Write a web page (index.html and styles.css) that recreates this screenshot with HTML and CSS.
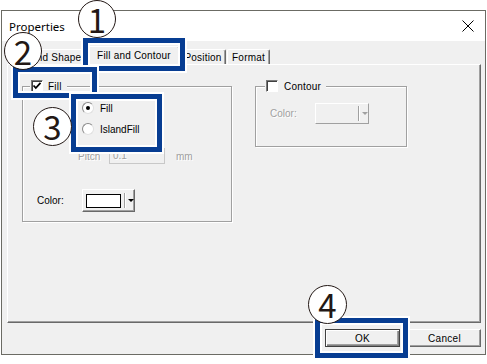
FILE: index.html
```html
<!DOCTYPE html>
<html lang="en">
  <head>
    <meta charset="UTF-8" />
    <title>Properties</title>
    <link rel="stylesheet" href="styles.css">
  </head>
  <body>
    <div class="screen">
      <div class="window">
        <div class="titlebar">
          <span class="title">Properties</span>
          <svg class="close" width="12" height="12" viewBox="0 0 12 12">
            <path d="M0.5 0.5 L11.5 11.5 M11.5 0.5 L0.5 11.5" stroke="#000" stroke-width="1" fill="none" />
          </svg>
        </div>

        <div class="client">
          <div class="tabs">
            <div class="tab tab-shape">Round Shape</div>
            <div class="tab active">Fill and Contour</div>
            <div class="tab tab-position">Position</div>
            <div class="tab tab-format">Format</div>
          </div>

          <div class="panel">
            <div class="group fill-group">
              <div class="group-title">
                <span class="check checked">
                  <svg width="10" height="10" viewBox="0 0 10 10">
                    <path d="M1.5 4.5 L3.8 7 L8.5 1.8" stroke="#000" stroke-width="1.8" fill="none" />
                  </svg>
                </span>
                <span>Fill</span>
              </div>

              <div class="radios">
                <div class="radio-row"><span class="radio on"></span>Fill</div>
                <div class="radio-row"><span class="radio"></span>IslandFill</div>
              </div>

              <div class="pitch-row">
                <span class="pitch-label disabled">Pitch</span>
                <span class="pitch-input disabled">0.1</span>
                <span class="pitch-unit disabled">mm</span>
              </div>

              <div class="color-row">
                <span class="color-label">Color:</span>
                <span class="color-button">
                  <span class="swatch"></span>
                  <span class="split"></span>
                  <span class="arrow"></span>
                </span>
              </div>
            </div>

            <div class="group contour-group">
              <div class="group-title">
                <span class="check"></span>
                <span>Contour</span>
              </div>
              <div class="contour-row">
                <span class="color-label disabled">Color:</span>
                <span class="color-button off">
                  <span class="swatch blank"></span>
                  <span class="split"></span>
                  <span class="arrow grey"></span>
                </span>
              </div>
            </div>
          </div>

          <div class="buttons">
            <div class="btn default">OK</div>
            <div class="btn">Cancel</div>
          </div>
        </div>
      </div>

      <!-- callouts -->
      <div class="mark box1"></div>
      <div class="mark box2"></div>
      <div class="mark box3"></div>
      <div class="mark box4"></div>

      <div class="badge badge1">1</div>
      <div class="badge badge2">2</div>
      <div class="badge badge3">3</div>
      <div class="badge badge4">4</div>
    </div>
  </body>
</html>
```

FILE: styles.css
```css
body {
  margin: 0;
  background: #fff;
  font-family: "Liberation Sans", Arial, sans-serif;
  font-size: 10px;
  color: #000;
}

.screen {
  position: relative;
  width: 487px;
  height: 364px;
  padding: 10px 0 0 1px;
  box-sizing: border-box;
  overflow: hidden;
}

.window {
  box-sizing: border-box;
  width: 485px;
  height: 345px;
  border: 1px solid #6b6b64;
  display: flex;
  flex-direction: column;
}

.titlebar {
  height: 30px;
  flex: none;
  background: #fff;
  display: flex;
  align-items: center;
  justify-content: space-between;
  padding: 0 11px 0 7px;
}

.title {
  font-family: "Noto Sans", "Open Sans", sans-serif;
  font-size: 11.5px;
}

.close {
  display: block;
}

.client {
  flex: 1;
  background: #f0f0f0;
  padding: 5px 4px 0 5px;
  display: flex;
  flex-direction: column;
}

/* tabs */
.tabs {
  display: flex;
  align-items: flex-end;
  height: 18px;
  padding-left: 2px;
  position: relative;
  z-index: 1;
}

.tab {
  box-sizing: border-box;
  height: 15px;
  display: flex;
  align-items: center;
  justify-content: center;
  border-top: 1px solid #fff;
  border-left: 1px solid #fff;
  border-right: 1px solid #696969;
  box-shadow: inset -1px 0 #a0a0a0;
  border-radius: 2px 2px 0 0;
  letter-spacing: 0.2px;
}

.tab-shape {
  width: 79px;
  padding-left: 2px;
}

.tab.active {
  width: 92px;
  height: 19px;
  margin-bottom: -1px;
  background: #f0f0f0;
  padding-bottom: 2px;
}

.tab-position {
  width: 46px;
}

.tab-format {
  width: 43px;
  margin-left: 1px;
}

.panel {
  box-sizing: border-box;
  height: 259px;
  border-top: 1px solid #fff;
  border-left: 1px solid #fff;
  border-right: 1px solid #696969;
  border-bottom: 1px solid #696969;
  box-shadow: inset -1px -1px #a0a0a0;
  padding: 21px 0 0 14px;
  display: flex;
  align-items: flex-start;
  gap: 23px;
}

/* group boxes */
.group {
  box-sizing: border-box;
  border: 1px solid #a0a0a0;
  box-shadow: inset 1px 1px #fff, 1px 1px #fff;
}

.fill-group {
  width: 210px;
  height: 136px;
}

.contour-group {
  width: 152px;
  height: 61px;
}

.group-title {
  display: flex;
  align-items: center;
  gap: 5px;
  width: max-content;
  height: 12px;
  margin: -7px 0 0 7px;
  padding: 0 5px 0 1px;
  background: #f0f0f0;
  letter-spacing: 0.2px;
}

.contour-group .group-title {
  margin-left: 9px;
  gap: 6px;
}

.check {
  box-sizing: border-box;
  width: 12px;
  height: 12px;
  background: #fff;
  border: 1px solid;
  border-color: #7a7a7a #fff #fff #7a7a7a;
  box-shadow: inset 1px 1px #404040;
  display: flex;
  align-items: center;
  justify-content: center;
}

.radios {
  margin: 10px 0 0 59px;
  display: flex;
  flex-direction: column;
  gap: 9px;
}

.radio-row {
  display: flex;
  align-items: center;
  gap: 6px;
  height: 12px;
}

.radio {
  box-sizing: border-box;
  width: 12px;
  height: 12px;
  border-radius: 50%;
  background: #fff;
  border: 1px solid;
  border-color: #8a8a8a #e0e0e0 #e0e0e0 #8a8a8a;
  position: relative;
}

.radio.on::after {
  content: "";
  position: absolute;
  left: 3px;
  top: 3px;
  width: 4px;
  height: 4px;
  border-radius: 50%;
  background: #000;
}

.disabled {
  color: #a0a0a0;
  text-shadow: 1px 1px #fff;
}

.pitch-row {
  display: flex;
  align-items: center;
  margin: 13px 0 0 55px;
  height: 16px;
}

.pitch-label {
  width: 31px;
}

.pitch-input {
  box-sizing: border-box;
  width: 56px;
  height: 16px;
  border: 1px solid #c8c8c8;
  padding: 1px 0 0 3px;
}

.pitch-unit {
  margin-left: 11px;
}

.color-row {
  display: flex;
  align-items: center;
  margin: 25px 0 0 14px;
}

.color-label {
  width: 45px;
}

.color-button {
  box-sizing: border-box;
  width: 53px;
  height: 23px;
  display: flex;
  align-items: center;
  padding-left: 3px;
  border-top: 1px solid #fff;
  border-left: 1px solid #fff;
  border-right: 1px solid #696969;
  border-bottom: 1px solid #696969;
  box-shadow: inset -1px -1px #a0a0a0;
}

.swatch {
  box-sizing: border-box;
  width: 35px;
  height: 14px;
  background: #fff;
  border: 1px solid #000;
}

.split {
  width: 1px;
  height: 15px;
  margin-left: 3px;
  background: #a0a0a0;
  box-shadow: 1px 0 #fff;
}

.arrow {
  margin-left: 3px;
  width: 0;
  height: 0;
  border-left: 3px solid transparent;
  border-right: 3px solid transparent;
  border-top: 3px solid #000;
}

.color-button.off {
  width: 54px;
  height: 21px;
  border-color: #fff #a0a0a0 #a0a0a0 #fff;
  box-shadow: none;
}

.swatch.blank {
  width: 36px;
  border: none;
  background: transparent;
}

.arrow.grey {
  border-top-color: #a0a0a0;
}

.contour-row {
  display: flex;
  align-items: center;
  margin: 11px 0 0 14px;
}

/* dialog buttons */
.buttons {
  display: flex;
  justify-content: flex-end;
  gap: 8px;
  margin-top: 6px;
}

.btn {
  box-sizing: border-box;
  height: 18px;
  display: flex;
  align-items: center;
  justify-content: center;
  border-top: 1px solid #fff;
  border-left: 1px solid #fff;
  border-right: 1px solid #696969;
  border-bottom: 1px solid #696969;
  box-shadow: inset -1px -1px #a0a0a0;
  width: 73px;
  letter-spacing: 0.3px;
}

.btn.default {
  width: 75px;
  border: 1px solid #404040;
  box-shadow: inset 1px 1px #fff, inset -1px -1px #808080, inset -2px -2px #a0a0a0;
}

/* callout frames and numbers */
.mark {
  position: absolute;
  z-index: 2;
  box-sizing: border-box;
  border: 5px solid #073d92;
  box-shadow: 0 0 0 2px #fff, inset 0 0 0 2px #fff;
}

.box1 { left: 83px; top: 38px; width: 102px; height: 33px; }
.box2 { left: 13px; top: 67px; width: 84px; height: 31px; }
.box3 { left: 71px; top: 94px; width: 91px; height: 58px; }
.box4 { left: 315px; top: 318px; width: 93px; height: 40px; }

.badge {
  position: absolute;
  z-index: 3;
  box-sizing: border-box;
  width: 38px;
  height: 38px;
  border-radius: 50%;
  border: 1.5px solid #231815;
  background: #fff;
  color: #231815;
  font-family: "Noto Sans CJK JP", "Noto Sans", sans-serif;
  font-size: 33px;
  line-height: 1;
  display: flex;
  align-items: center;
  justify-content: center;
}

.badge1 { left: 78px; top: 0; }
.badge2 { left: 4px; top: 32px; }
.badge3 { left: 33px; top: 107px; width: 39px; height: 39px; }
.badge4 { left: 308px; top: 285px; width: 39px; height: 39px; }
```
